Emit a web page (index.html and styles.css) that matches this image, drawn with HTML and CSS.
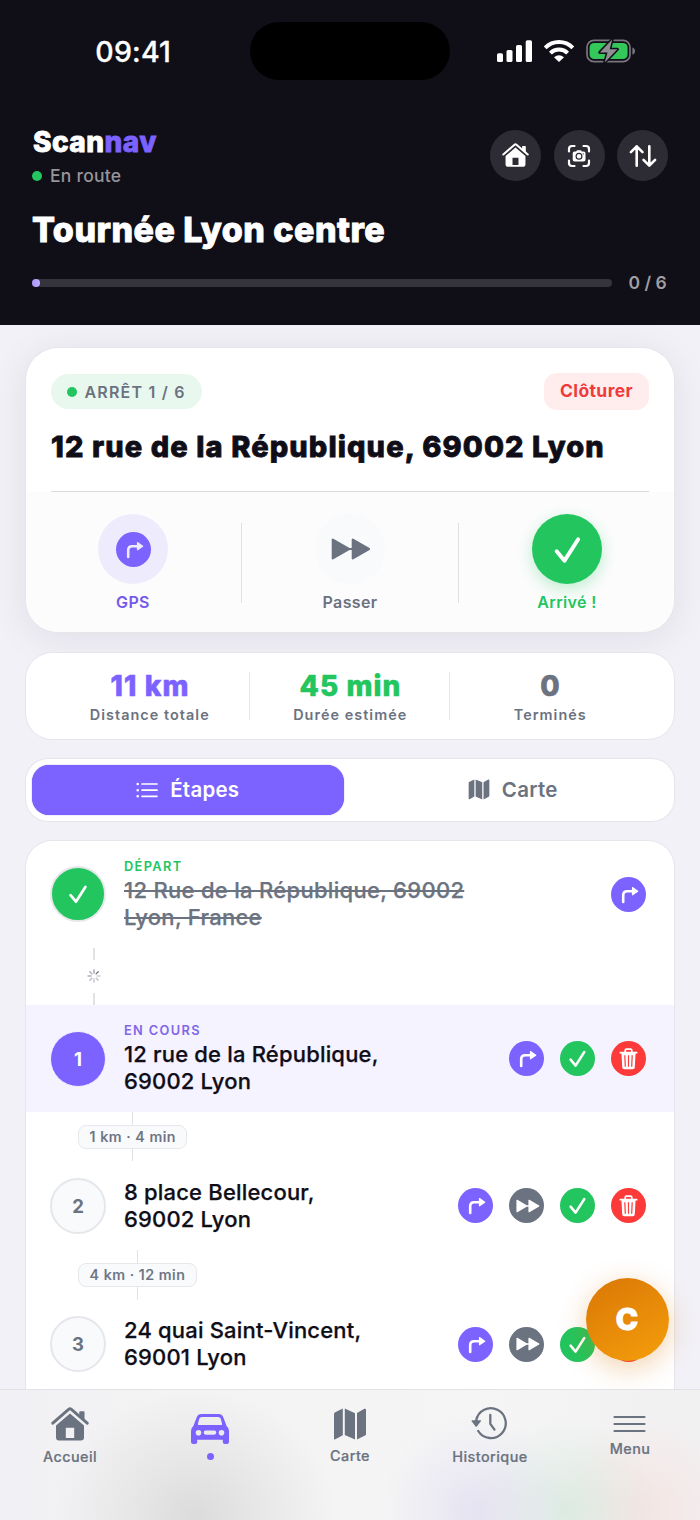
FILE: index.html
```html
<!DOCTYPE html>
<html lang="fr">
<head>
<meta charset="utf-8">
<title>Scannav</title>
<link rel="stylesheet" href="styles.css">
</head>
<body>
<svg class="defs" aria-hidden="true">
  <symbol id="home" viewBox="0 0 38 34">
    <path d="M1.800 16.200 17.600 2.400q1.400-1.100 2.800 0l15.800 13.800" fill="none" stroke="currentColor" stroke-width="2.900" stroke-linecap="round"/>
    <path d="M29.300 4.200h3.200q1 0 1 1v8l-5.200-4.500V5.200q0-1 1-1z" fill="currentColor"/>
    <path fill-rule="evenodd" d="M19 6.400 33 18.400V30.500q0 3-3 3H8q-3 0-3-3V18.400zM14.800 20.700V31h8.400V20.700z" fill="currentColor"/>
  </symbol>
  <symbol id="turn" viewBox="0 0 35 35">
    <path d="M12.200 25V18.200q0-4 4-4H21.500" fill="none" stroke="currentColor" stroke-width="2.600" stroke-linecap="round"/>
    <path d="M21.500 10.600v7.200l5.200-3.600z" fill="currentColor" stroke="currentColor" stroke-width="1.200" stroke-linejoin="round"/>
  </symbol>
  <symbol id="check" viewBox="0 0 35 35">
    <path d="M10.600 18.600 15.600 24.600 24.300 11" fill="none" stroke="currentColor" stroke-width="2.500" stroke-linecap="round" stroke-linejoin="round"/>
  </symbol>
  <symbol id="forward" viewBox="0 0 40 22">
    <path d="M1.800 1.600v18.800L18 11zM21.800 1.600v18.800L38 11zM17 11h5" fill="currentColor" stroke="currentColor" stroke-width="2.200" stroke-linejoin="round"/>
  </symbol>
  <symbol id="trash" viewBox="0 0 35 35">
    <path d="M9.300 11.700H25.700M14.200 11V9.400q0-1.200 1.200-1.200h4.200q1.200 0 1.200 1.200V11" fill="none" stroke="currentColor" stroke-width="1.700" stroke-linecap="round"/>
    <path fill-rule="evenodd" d="M10.400 11.500H24.600L23.800 26.200q-.1 2-2.100 2H13.300q-2 0-2.100-2zM13.200 14.200l.5 11.600h1.200l-.5-11.600zM16.900 14.200v11.600h1.200V14.200zM20.600 14.200l-.5 11.600h1.200l.5-11.600z" fill="currentColor"/>
  </symbol>
  <symbol id="map" viewBox="0 0 34 32">
    <path d="M1 6.300Q1 5 2.200 4.300L9.800.6V27.200L2.400 31.300Q1 31.800 1 30.400zM11.800.6 22 5.200V31.600L11.800 27zM24 5 31.400.8Q33 .2 33 1.800V26Q33 27 32 27.600L24 31.600z" fill="currentColor"/>
  </symbol>
</svg>
<div class="screen">
  <header class="top">
    <div class="status">
      <span class="time">09:41</span>
      <span class="island"></span>
      <span class="signals">
        <svg width="36" height="24" viewBox="0 0 36 24" fill="#fff"><rect x="0" y="14.300" width="6" height="8.700" rx="1.600"/><rect x="9.500" y="11" width="6" height="12" rx="1.600"/><rect x="19" y="6" width="6" height="17" rx="1.600"/><rect x="28.700" y="1.300" width="6.300" height="21.700" rx="1.600"/></svg>
        <svg class="wifi" width="32" height="24" viewBox="0 0 32 24" fill="none" stroke="#fff" stroke-width="4"><path d="M2.200 8.800a19.500 19.500 0 0 1 27.600 0"/><path d="M7.400 14.100a12.100 12.100 0 0 1 17.200 0"/><path d="M11 18.300Q16 14.100 21 18.300L16 23z" fill="#fff" stroke="none"/></svg>
        <svg width="50" height="26" viewBox="0 0 50 26"><rect x="1" y="2.300" width="43" height="21.400" rx="7" fill="none" stroke="#77767d" stroke-width="1.700"/><rect x="3.600" y="4.900" width="38" height="16.200" rx="4.600" fill="#34c759"/><path d="M46.400 9.400c3.500 1 3.500 6.200 0 7.200z" fill="#77767d"/><path d="M26.200 1.500 13.800 14.400H21.500L18.700 24.500 31.400 11.300H23.700z" fill="#8f8e95" stroke="#100e17" stroke-width="3" paint-order="stroke" stroke-linejoin="round"/></svg>
      </span>
    </div>
    <div class="brand-row">
      <div class="brand">
        <div class="logo">Scan<span>nav</span></div>
        <div class="state"><i class="dot"></i><span>En route</span></div>
      </div>
      <div class="tools">
        <span class="tool"><svg width="27" height="24.200"><use href="#home"/></svg></span>
        <span class="tool"><svg width="24" height="24" viewBox="0 0 24 24" fill="none" stroke="#fff" stroke-width="2.200" stroke-linecap="round"><path d="M2 7.500V5q0-3 3-3h2.500M16.500 2H19q3 0 3 3v2.500M22 16.500V19q0 3-3 3h-2.500M7.500 22H5q-3 0-3-3v-2.500"/><path fill-rule="evenodd" fill="#fff" stroke="none" d="M7.400 7.600h1.700l.9-1.300h4l.9 1.300h1.900q1.700 0 1.700 1.600v6.600q0 1.600-1.700 1.600H7.400q-1.700 0-1.700-1.600V9.200q0-1.600 1.700-1.600zM12 8.700a3.500 3.500 0 1 0 0 7 3.500 3.500 0 0 0 0-7zM12 9.900a2.300 2.300 0 1 1 0 4.600 2.300 2.300 0 0 1 0-4.600zM16.300 9.200a.6.600 0 1 0 0 1.200.6.600 0 0 0 0-1.200z"/></svg></span>
        <span class="tool"><svg width="28" height="24" viewBox="0 0 28 24" fill="none" stroke="#fff" stroke-width="2.600" stroke-linecap="round" stroke-linejoin="round"><path d="M7.700 21.700V2.400M1.900 8.200l5.800-5.800 5.800 5.800M20.300 2.300v19.300M14.500 15.800l5.800 5.800 5.800-5.800"/></svg></span>
      </div>
    </div>
    <h1 class="tour">Tournée Lyon centre</h1>
    <div class="progress"><div class="track"><i></i></div><span class="count">0 / 6</span></div>
  </header>

  <main class="content">
    <section class="card stop">
      <div class="stop-head">
        <span class="badge"><i class="dot"></i><span>ARRÊT 1 / 6</span></span>
        <span class="close">Clôturer</span>
      </div>
      <h2 class="address">12 rue de la République, 69002 Lyon</h2>
      <div class="actions">
        <div class="action gps"><span class="disc"><span class="mini violet"><svg><use href="#turn"/></svg></span></span><span>GPS</span></div>
        <div class="action skip"><span class="disc"><svg width="40" height="22"><use href="#forward"/></svg></span><span>Passer</span></div>
        <div class="action done"><span class="disc"><svg width="55" height="55"><use href="#check"/></svg></span><span>Arrivé !</span></div>
      </div>
    </section>

    <section class="card stats">
      <div class="stat c-violet"><b>11 km</b><span>Distance totale</span></div>
      <div class="stat c-green"><b>45 min</b><span>Durée estimée</span></div>
      <div class="stat c-grey"><b>0</b><span>Terminés</span></div>
    </section>

    <section class="card tabs">
      <div class="tab active"><svg width="22" height="16" viewBox="0 0 22 16" fill="none" stroke="#fff" stroke-width="1.700" stroke-linecap="round"><path d="M6 2h15M6 8.200h15M6 14.300h15"/><path stroke-width="2.600" d="M1.700 2h0M1.700 8.200h0M1.700 14.300h0"/></svg><span>Étapes</span></div>
      <div class="tab"><svg width="22" height="20.700"><use href="#map"/></svg><span>Carte</span></div>
    </section>

    <section class="card list">
      <div class="row tall passed">
        <span class="num"><svg width="38" height="38"><use href="#check"/></svg></span>
        <div class="where"><small>DÉPART</small><p>12 Rue de la République, 69002<br>Lyon, France</p></div>
        <div class="btns"><span class="mini violet"><svg><use href="#turn"/></svg></span></div>
      </div>
      <div class="wait">
        <i></i>
        <svg width="14" height="14" viewBox="-7 -7 14 14" stroke="#6b7280" stroke-width="1.300" stroke-linecap="round"><path d="M0-3V-6" opacity=".7"/><path d="M2.100-2.100 4.200-4.200" opacity="1"/><path d="M3 0H6" opacity=".35"/><path d="M2.100 2.100 4.200 4.200" opacity=".45"/><path d="M0 3V6" opacity=".45"/><path d="M-2.100 2.100-4.200 4.200" opacity=".5"/><path d="M-3 0H-6" opacity=".55"/><path d="M-2.100-2.100-4.200-4.200" opacity=".6"/></svg>
        <i></i>
      </div>
      <div class="row tall current">
        <span class="num">1</span>
        <div class="where"><small>EN COURS</small><p>12 rue de la République,<br>69002 Lyon</p></div>
        <div class="btns"><span class="mini violet"><svg><use href="#turn"/></svg></span><span class="mini green"><svg><use href="#check"/></svg></span><span class="mini red"><svg><use href="#trash"/></svg></span></div>
      </div>
      <div class="leg"><i></i><span>1 km · 4 min</span><i></i></div>
      <div class="row">
        <span class="num">2</span>
        <div class="where"><p>8 place Bellecour,<br>69002 Lyon</p></div>
        <div class="btns"><span class="mini violet"><svg><use href="#turn"/></svg></span><span class="mini grey"><svg class="ff"><use href="#forward"/></svg></span><span class="mini green"><svg><use href="#check"/></svg></span><span class="mini red"><svg><use href="#trash"/></svg></span></div>
      </div>
      <div class="leg"><i></i><span>4 km · 12 min</span><i></i></div>
      <div class="row">
        <span class="num">3</span>
        <div class="where"><p>24 quai Saint-Vincent,<br>69001 Lyon</p></div>
        <div class="btns"><span class="mini violet"><svg><use href="#turn"/></svg></span><span class="mini grey"><svg class="ff"><use href="#forward"/></svg></span><span class="mini green"><svg><use href="#check"/></svg></span><span class="mini red"><svg><use href="#trash"/></svg></span></div>
      </div>
    </section>
  </main>

  <div class="fab">C</div>

  <nav class="nav">
    <div class="item home"><svg width="38" height="34"><use href="#home"/></svg><span>Accueil</span></div>
    <div class="item car"><svg width="40" height="32" viewBox="0 0 40 32"><path fill="#7c62ff" fill-rule="evenodd" d="M11.500 1h17q3.600 0 4.900 3.400l3.200 8.600q2.400 1.800 2.400 5V29q0 2-2 2h-2.200q-2 0-2-2v-2.200H7.200V29q0 2-2 2H3q-2 0-2-2V18q0-3.200 2.400-5l3.200-8.600Q7.900 1 11.500 1zM11.800 3.900q-1.800 0-2.500 1.700L7.900 10.900q-.3 1.100.9 1.100h22.400q1.200 0 .9-1.100l-1.400-5.300q-.7-1.700-2.500-1.700zM8.500 16.900a2.800 2.800 0 1 0 0 5.600 2.800 2.800 0 0 0 0-5.600zM31.500 16.900a2.800 2.800 0 1 0 0 5.600 2.800 2.800 0 0 0 0-5.600zM15.800 17.500a2.100 2.100 0 0 0 0 4.200h8.400a2.100 2.100 0 0 0 0-4.200z"/></svg><i></i></div>
    <div class="item carte"><svg width="34" height="32"><use href="#map"/></svg><span>Carte</span></div>
    <div class="item hist"><svg width="36" height="34" viewBox="0 0 36 34"><g fill="none" stroke="currentColor" stroke-width="2.300" stroke-linecap="round" stroke-linejoin="round"><path d="M5.200 14.500A14.900 14.900 0 1 1 7.200 25"/><path d="M19.300 9v8.800l4.200 5.800"/></g><path d="M1.200 14.200H9.400q1 .1.400 1L5.900 20.500q-.7.700-1.400 0L.7 15.200q-.5-.9.500-1z" fill="currentColor"/></svg><span>Historique</span></div>
    <div class="item menu"><svg width="33" height="18" viewBox="0 0 33 18" stroke="currentColor" stroke-width="2.200" stroke-linecap="round"><path d="M1.500 2h30M1.500 9h30M1.500 16h30"/></svg><span>Menu</span></div>
  </nav>
</div>
</body>
</html>
```
FILE: styles.css
```css
* { box-sizing: border-box; margin: 0; padding: 0; }
body { font-family: Inter, "Noto Sans", sans-serif; background: #f2f1f7; color: #0f0d17; }
.defs { position: absolute; width: 0; height: 0; }
svg { display: block; flex: none; }
i { display: block; }
.screen { position: relative; width: 700px; height: 1520px; overflow: hidden; background: #f2f1f7; }

/* header */
.top { height: 325px; background: #100e17; color: #fff; padding: 0 32px; }
.status { display: grid; grid-template-columns: 1fr 200px 1fr; height: 102px; align-items: center; }
.time { justify-self: center; padding-right: 15.500px; font-size: 28.500px; font-weight: 500; letter-spacing: .2px; -webkit-text-stroke: .3px; }
.island { height: 58px; border-radius: 29px; background: #000; }
.signals { display: flex; align-items: center; padding-left: 46.500px; }
.wifi { margin: 0 11.500px 0 10px; }
.brand-row { display: flex; justify-content: space-between; align-items: center; height: 107px; }
.brand { padding-top: 4px; }
.logo { padding-left: 1px; font-size: 28px; font-weight: 800; line-height: 36px; letter-spacing: .45px; -webkit-text-stroke: .8px; }
.logo span { color: #7c62ff; }
.state { display: flex; align-items: center; gap: 8px; font-size: 17.500px; font-weight: 500; line-height: 32px; color: #96959a; letter-spacing: .25px; }
.dot { width: 10px; height: 10px; border-radius: 50%; background: #22c55e; }
.tools { display: flex; gap: 12.500px; }
.tool { display: grid; place-items: center; width: 51px; height: 51px; border-radius: 50%; background: #2d2b34; color: #fff; }
.tour { font-size: 34px; font-weight: 800; line-height: 42px; letter-spacing: .5px; -webkit-text-stroke: .9px; }
.progress { display: flex; align-items: center; gap: 16.500px; height: 63px; }
.track { flex: 1; height: 8px; border-radius: 4px; background: #35333c; }
.track i { width: 8px; height: 8px; border-radius: 50%; background: linear-gradient(90deg, #a996ff, #bfaeff); }
.count { width: 39.500px; font-size: 17.500px; font-weight: 600; color: #a09fa4; white-space: nowrap; }

/* cards */
.content { display: flex; flex-direction: column; padding: 23px 26px 0; }
.card { background: #fff; box-shadow: 0 0 0 1px #e6e5eb; border-radius: 26px; }
.stop { height: 284px; border-radius: 32px; overflow: hidden; box-shadow: 0 0 0 1px #e6e5ea, 0 6px 38px rgba(30,20,60,.085); }
.stop-head { display: flex; justify-content: space-between; align-items: center; padding: 25px 25px 0; }
.badge { display: flex; align-items: center; gap: 8px; height: 35px; width: 151px; padding-left: 15.500px; border-radius: 18px; background: #e8f8ef; font-size: 16px; font-weight: 600; letter-spacing: 1.200px; color: #6b7280; white-space: nowrap; }
.close { width: 105px; height: 37px; border-radius: 13px; background: #ffeded; color: #ef3b3b; font-size: 17.500px; font-weight: 650; line-height: 36px; text-align: center; letter-spacing: .4px; }
.address { margin: 0 25px; height: 82px; padding-top: 16px; border-bottom: 1px solid #d9dadd; font-size: 29px; font-weight: 800; line-height: 41px; letter-spacing: 1.100px; -webkit-text-stroke: .8px; white-space: nowrap; }
.actions { display: grid; grid-template-columns: 214px 1fr 214px; height: 141px; background: #fcfcfc; padding-top: 22px; }
.action { position: relative; display: flex; flex-direction: column; align-items: center; font-size: 16px; font-weight: 620; line-height: 36px; letter-spacing: .35px; }
.action + .action::before { content: ""; position: absolute; left: 1px; top: 9px; width: 1px; height: 80px; background: #dfe0e4; }
.action.done::before { left: -2px; }
.disc { display: grid; place-items: center; width: 70px; height: 70px; border-radius: 50%; }
.gps { color: #7559ec; } .gps .disc { background: #eeebfd; } .gps .mini { color: #eeebfd; }
.skip { color: #6b7280; } .skip .disc { background: #f9fafc; padding-left: 2px; }
.done { color: #22c55e; } .done .disc { background: #22c55e; color: #fff; box-shadow: 0 5px 16px rgba(34,197,94,.28); }

.stats { height: 86px; margin-top: 21px; padding: 0 25px 0 23px; display: grid; grid-template-columns: repeat(3, 1fr); }
.stat { display: flex; flex-direction: column; align-items: center; height: 48px; margin-top: 19px; font-size: 14.400px; font-weight: 620; letter-spacing: 1.050px; line-height: 24px; }
.stat + .stat { border-left: 1.500px solid #e5e7eb; }
.stat b { font-size: 28px; font-weight: 800; line-height: 30px; letter-spacing: 1.100px; -webkit-text-stroke: .6px; margin-top: -1px; padding-left: 2px; }
.stat span { color: #6b7280; line-height: 28px; padding-left: 1.500px; }
.c-violet { color: #7c62ff; } .c-green { color: #22c55e; } .c-grey { color: #6b7280; }

.tabs { display: flex; height: 62px; margin-top: 20px; padding: 6px; border-radius: 22px; }
.tab { flex: 1; display: flex; align-items: center; justify-content: center; gap: 12px; padding-left: 14px; padding-bottom: 1px; font-size: 20.500px; font-weight: 600; letter-spacing: .25px; color: #6b7280; }
.tab.active { flex: 0 0 311.500px; padding-left: 0; border-radius: 17px; background: #7c62ff; color: #fff; box-shadow: 0 0 1px #6a50d8; }

/* stops */
.list { height: 720px; margin-top: 20px; overflow: hidden; }
.row { display: flex; align-items: center; height: 89px; padding: 0 28px 0 24px; }
.row.tall { height: 106.500px; }
.row.current { background: #f5f3ff; height: 107px; }
.num { display: grid; place-items: center; width: 56px; height: 56px; border: 2px solid #e5e7eb; border-radius: 50%; background: #f9fafc; color: #6b7280; font-size: 18.500px; font-weight: 700; }
.passed .num { background: #22c55e; color: #fff; }
.current .num { background: #7c62ff; border-color: #f5f3ff; color: #fff; border-width: 1px; }
.where { flex: 1; margin-left: 18px; font-size: 22px; font-weight: 500; line-height: 27px; letter-spacing: .18px; -webkit-text-stroke: .25px; white-space: nowrap; }
.tall .where { padding-top: 2px; }
.where small { display: block; font-size: 12.800px; font-weight: 620; line-height: 17px; letter-spacing: 1.350px; margin-top: -2px; margin-bottom: 2px; -webkit-text-stroke: 0; }
.passed small { color: #22c55e; } .passed p { color: #6b7280; letter-spacing: .3px; text-decoration: line-through; text-decoration-thickness: 2px; }
.current small { color: #8067e6; }
.btns { display: flex; gap: 16px; }
.mini { display: grid; place-items: center; width: 35px; height: 35px; border-radius: 50%; color: #fff; }
.mini svg { width: 35px; height: 35px; }
.mini .ff { width: 24px; height: 14px; margin-left: 2px; }
.violet { background: #7c62ff; } .green { background: #22c55e; } .red { background: #fc3a3a; } .grey { background: #6b7280; }
.wait { display: flex; flex-direction: column; align-items: center; justify-content: space-between; width: 14px; height: 57.500px; margin-left: 61px; }
.wait i, .leg i { width: 1.500px; height: 12.500px; background: #e1e2e6; }
.leg { display: flex; flex-direction: column; align-items: center; width: max-content; margin-left: 52px; }
.leg span { height: 24.300px; padding: 0 10.500px; border: 1px solid #e6e8eb; border-radius: 8px; background: #f9fafc; color: #6b7280; font-size: 14.400px; font-weight: 500; line-height: 22px; letter-spacing: .45px; -webkit-text-stroke: .2px; }

/* overlays */
.fab { position: absolute; left: 585.500px; top: 1278px; width: 83px; height: 83px; border-radius: 50%; background: linear-gradient(150deg, #d97706, #f59e0b); color: #fff; font-size: 30px; font-weight: 800; line-height: 83px; text-align: center; -webkit-text-stroke: 1.200px; box-shadow: 0 7px 28px rgba(217,119,6,.33); }
.nav { position: absolute; left: 0; right: 0; bottom: 0; height: 131px; display: grid; grid-template-columns: repeat(5, 1fr); border-top: 1.500px solid #e2e2e6; color: #6b7280;
  background:
    radial-gradient(ellipse 140px 125px at 195px 125px, rgba(200,200,200,.55), rgba(208,208,208,.35) 45%, transparent),
    radial-gradient(ellipse 95px 95px at 475px 120px, rgba(215,208,240,.5), rgba(220,215,240,.28) 50%, transparent),
    radial-gradient(ellipse 95px 95px at 565px 120px, rgba(200,230,212,.55), rgba(205,230,215,.28) 50%, transparent),
    radial-gradient(ellipse 90px 95px at 642px 120px, rgba(248,212,208,.45), rgba(248,215,212,.25) 50%, transparent),
    linear-gradient(90deg, #f1f1f5, #f3f3f3 25%, #f5f5f5 70%, #f1f0f1); }
.item { display: flex; flex-direction: column; align-items: center; font-size: 14.400px; font-weight: 500; line-height: 20px; letter-spacing: .45px; -webkit-text-stroke: .2px; }
.home svg { margin: 16.500px 0 6.500px; }
.car svg { margin: 23px 0 8px; }
.car i { width: 7px; height: 7px; border-radius: 50%; background: #7c62ff; }
.carte svg { margin: 18px 0 6px; }
.hist svg { margin: 16px 2px 7px 0; }
.menu svg { margin: 25px 1px 6px 0; }
```
